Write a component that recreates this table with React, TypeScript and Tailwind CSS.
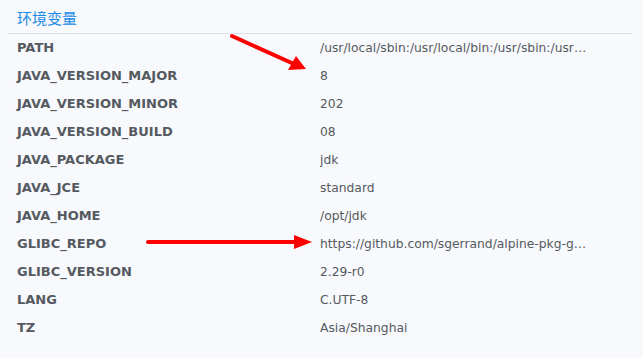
import React from "react";

type EnvVar = { name: string; value: string };

const envVars: EnvVar[] = [
  { name: "PATH", value: "/usr/local/sbin:/usr/local/bin:/usr/sbin:/usr/bin:/sbin:/bin" },
  { name: "JAVA_VERSION_MAJOR", value: "8" },
  { name: "JAVA_VERSION_MINOR", value: "202" },
  { name: "JAVA_VERSION_BUILD", value: "08" },
  { name: "JAVA_PACKAGE", value: "jdk" },
  { name: "JAVA_JCE", value: "standard" },
  { name: "JAVA_HOME", value: "/opt/jdk" },
  { name: "GLIBC_REPO", value: "https://github.com/sgerrand/alpine-pkg-glibc" },
  { name: "GLIBC_VERSION", value: "2.29-r0" },
  { name: "LANG", value: "C.UTF-8" },
  { name: "TZ", value: "Asia/Shanghai" },
];

// red callout arrows drawn over the table
function Arrows() {
  return (
    <svg className="absolute inset-0 pointer-events-none" width="643" height="358">
      <line x1="232" y1="36" x2="294" y2="64" stroke="#f00" strokeWidth="4" strokeLinecap="round" />
      <polygon points="306,69 288,70 296,56" fill="#f00" />
      <line x1="148" y1="242" x2="296" y2="242" stroke="#f00" strokeWidth="4" strokeLinecap="round" />
      <polygon points="312,242 294,235 294,249" fill="#f00" />
    </svg>
  );
}

export default function App() {
  return (
    <div className="relative w-[643px] h-[358px] bg-[#f8f9fc] overflow-hidden">
      <div className="pl-[17px] pt-[8px] h-[33px]">
        <h2
          className="text-[15px] leading-[20px] text-[#1a8ae6]"
          style={{ fontFamily: '"Noto Sans CJK SC", sans-serif' }}
        >
          环境变量
        </h2>
      </div>
      <div className="mx-[8px] w-[625px] border-t border-[#dde1e8]">
        {envVars.map((v) => (
          <div key={v.name} className="flex items-center h-[28px]">
            <div className="w-[312px] shrink-0 pl-[9px] text-[13px] font-bold text-[#555a61] font-['DejaVu_Sans',sans-serif]">
              {v.name}
            </div>
            <div className="w-[268px] truncate text-[12.3px] text-[#555a61] font-['DejaVu_Sans',sans-serif]">
              {v.value}
            </div>
          </div>
        ))}
      </div>
      <Arrows />
    </div>
  );
}
